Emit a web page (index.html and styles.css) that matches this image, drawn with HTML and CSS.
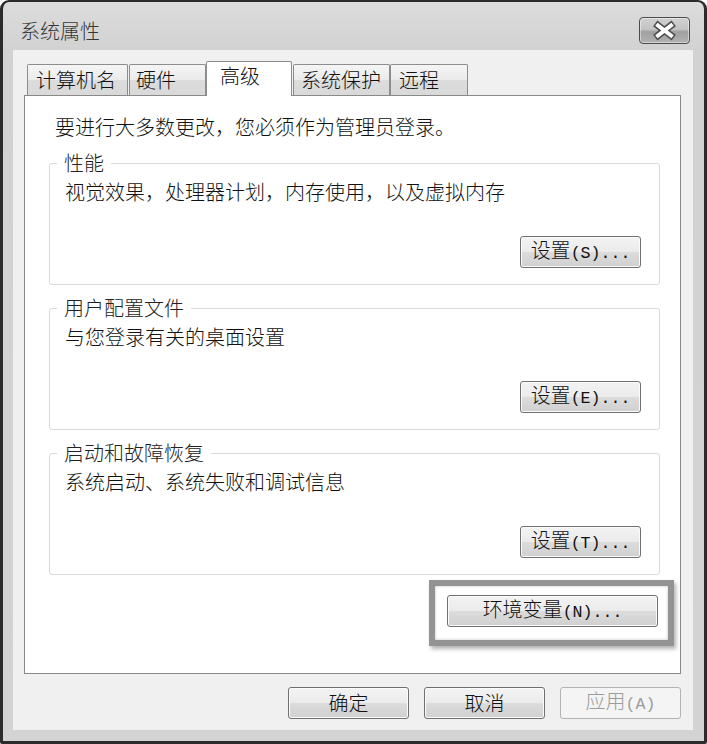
FILE: index.html
```html
<!DOCTYPE html>
<html lang="zh-CN">
<head>
<meta charset="utf-8">
<title>系统属性</title>
<link rel="stylesheet" href="styles.css">
</head>
<body>
<div class="window">
  <div class="titlebar">
    <span class="title">系统属性</span>
    <button class="close" aria-label="关闭">
      <svg width="49" height="25" viewBox="0 0 49 25">
        <path d="M18 7.5 L31 17.5 M31 7.5 L18 17.5" stroke="#4f4f4f" stroke-width="7" fill="none" stroke-linecap="square"/>
        <path d="M18 7.5 L31 17.5 M31 7.5 L18 17.5" stroke="#ffffff" stroke-width="4" fill="none" stroke-linecap="square"/>
      </svg>
    </button>
  </div>
  <div class="client">
    <div class="tabs">
      <div class="tab">计算机名</div>
      <div class="tab">硬件</div>
      <div class="tab tab-active">高级</div>
      <div class="tab">系统保护</div>
      <div class="tab">远程</div>
    </div>
    <div class="panel">
      <p class="intro">要进行大多数更改，您必须作为管理员登录。</p>
      <fieldset class="group">
        <legend>性能</legend>
        <p class="desc">视觉效果，处理器计划，内存使用，以及虚拟内存</p>
        <div class="group-actions"><button class="btn">设置<span class="hw">(S)...</span></button></div>
      </fieldset>
      <fieldset class="group">
        <legend>用户配置文件</legend>
        <p class="desc">与您登录有关的桌面设置</p>
        <div class="group-actions"><button class="btn">设置<span class="hw">(E)...</span></button></div>
      </fieldset>
      <fieldset class="group">
        <legend>启动和故障恢复</legend>
        <p class="desc">系统启动、系统失败和调试信息</p>
        <div class="group-actions"><button class="btn">设置<span class="hw">(T)...</span></button></div>
      </fieldset>
      <div class="env-row">
        <div class="highlight"><button class="btn btn-env">环境变量<span class="hw">(N)...</span></button></div>
      </div>
    </div>
    <div class="footer">
      <button class="btn">确定</button>
      <button class="btn">取消</button>
      <button class="btn" disabled>应用<span class="hw">(A)</span></button>
    </div>
  </div>
</div>
</body>
</html>
```

FILE: styles.css
```css
* { box-sizing: border-box; }
html, body { margin: 0; padding: 0; }
body {
  width: 707px;
  height: 744px;
  overflow: hidden;
  background: #ffffff;
  font-family: "Noto Sans CJK SC", "Noto Sans", sans-serif;
  font-size: 20px;
  font-weight: 300;
  color: #111;
}
.window {
  width: 707px;
  height: 744px;
  border: 3px solid #2b2b2b;
  border-top-width: 2px;
  border-radius: 9px 9px 2px 2px;
  background: linear-gradient(#dcdcdc 0, #d2d2d2 48px, #d3d3d3 100%);
  display: flex;
  flex-direction: column;
}
.titlebar {
  height: 48px;
  display: flex;
  align-items: flex-start;
  padding-left: 17px;
}
.title {
  margin-top: 17px;
  line-height: 24px;
  color: #353535;
}
.close {
  margin: 15px 14px 0 auto;
  width: 51px;
  height: 27px;
  padding: 0;
  border: 1px solid #4c4c4c;
  border-radius: 4px;
  background: linear-gradient(#d0d0d0 0%, #c4c4c4 45%, #a0a0a0 55%, #b2b2b2 100%);
  box-shadow: inset 0 0 0 1px rgba(255,255,255,0.45);
  display: flex;
  align-items: center;
  justify-content: center;
}
.close svg { display: block; }
.client {
  margin-left: 10px;
  width: 680px;
  height: 680px;
  background: #f0f0f0;
  padding: 11px 12px 11px 11px;
  display: flex;
  flex-direction: column;
}
.tabs {
  height: 34px;
  display: flex;
  align-items: flex-end;
  padding-left: 3px;
  position: relative;
  z-index: 1;
}
.tab {
  height: 31px;
  border: 1px solid #8d8d8d;
  border-bottom: none;
  border-radius: 2px 2px 0 0;
  background: linear-gradient(#f5f5f5 0%, #ebebeb 48%, #dcdcdc 52%, #d9d9d9 100%);
  padding: 3px 0 0 8px;
  line-height: 24px;
  color: #111;
  white-space: nowrap;
}
.tab:nth-child(1) { width: 101px; }
.tab:nth-child(2) { width: 77px; margin-left: 1px; padding-left: 6px; }
.tab:nth-child(3) { width: 86px; }
.tab:nth-child(4) { width: 97px; margin-left: 1px; padding-left: 7px; }
.tab:nth-child(5) { width: 78px; }
.tab-active {
  height: 35px;
  margin-bottom: -1px;
  background: #ffffff;
  padding-top: 2px;
  padding-left: 13px;
  position: relative;
  z-index: 2;
}
.panel {
  height: 579px;
  border: 1px solid #898989;
  background: #ffffff;
  padding: 19px 20px 0 24px;
  display: flex;
  flex-direction: column;
}
.intro {
  margin: 0 0 12px 6px;
  line-height: 24px;
}
.group {
  margin: 0;
  padding: 5px 18px 16px 15px;
  border: 1px solid #dadada;
  border-radius: 3px;
  min-width: 0;
}
.group + .group { margin-top: 11px; }
.group legend {
  padding: 0 7px;
  margin-left: -8px;
  line-height: 24px;
  color: #222;
}
.desc {
  margin: 0;
  line-height: 24px;
}
.group-actions {
  display: flex;
  justify-content: flex-end;
  margin-top: 32px;
}
.btn {
  width: 121px;
  height: 32px;
  padding: 0;
  border: 1px solid #707070;
  border-radius: 3px;
  background: linear-gradient(#f3f3f3 0%, #ebebeb 49%, #dcdcdc 51%, #d0d0d0 100%);
  box-shadow: inset 0 0 0 1px #fbfbfb;
  font-family: inherit;
  font-size: 20px;
  font-weight: 300;
  line-height: 24px;
  color: #111;
  white-space: nowrap;
}
.btn:disabled {
  border-color: #b3b3b3;
  background: #f4f4f4;
  box-shadow: none;
  color: #9c9c9c;
}
.hw {
  font-family: "Liberation Mono", monospace;
  font-size: 16.6px;
  font-weight: 400;
}
.env-row {
  display: flex;
  justify-content: flex-end;
  margin-top: 19px;
  padding-right: 2px;
}
.btn-env { width: 211px; }
.highlight { position: relative; }
.highlight::before {
  content: "";
  position: absolute;
  left: -18px;
  top: -14px;
  right: -16px;
  bottom: -19px;
  border: 6px solid #939393;
  box-shadow: 2px 3px 4px rgba(0,0,0,0.3), inset 0 0 3px rgba(0,0,0,0.25);
  pointer-events: none;
}
.footer {
  display: flex;
  justify-content: flex-end;
  gap: 15px;
  margin-top: 13px;
}
```
